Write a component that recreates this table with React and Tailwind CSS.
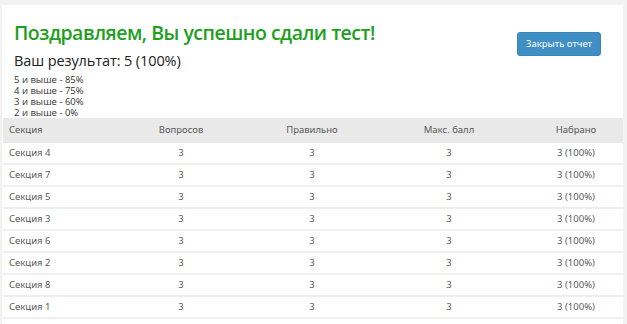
import React from "react";

const rows = ["Секция 4", "Секция 7", "Секция 5", "Секция 3", "Секция 6", "Секция 2", "Секция 8", "Секция 1"];
const cols = "grid grid-cols-[110px_136px_126px_148px_100px]";

export default function App() {
  return (
    <div className="w-[627px] h-[324px] bg-[#f2f2f2] pt-[5px] pl-[2px] pr-[4px] overflow-hidden" style={{ fontFamily: '"Open Sans", "Noto Sans", sans-serif' }}>
      <div className="bg-white h-full">
        <div className="flex justify-between pl-[12px] pr-[22px] pt-[15px]">
          <div>
            <h1 className="text-[19.5px] leading-[26px] text-[#1ea01e] font-semibold tracking-[-0.5px]">Поздравляем, Вы успешно сдали тест!</h1>
            <div className="text-[14.5px] leading-[20px] text-[#222] mt-[5px] tracking-[-0.1px]">Ваш результат: 5 (100%)</div>
            <div className="text-[9.5px] leading-[11px] text-[#333] mt-[3px]">
              <div>5 и выше - 85%</div>
              <div>4 и выше - 75%</div>
              <div>3 и выше - 60%</div>
              <div>2 и выше - 0%</div>
            </div>
          </div>
          <button className="mt-[12px] h-[24px] w-[84px] bg-[#3f8fc5] text-white text-[9.5px] rounded-[3px] border border-[#3a84b6]" style={{ fontFamily: '"Noto Sans", sans-serif' }}>Закрыть отчет</button>
        </div>
        <div className="ml-[1px] text-[9.5px] text-[#5a5a5a]" style={{ fontFamily: '"Noto Sans", sans-serif' }}>
          <div className={`${cols} bg-[#e9e9e9] h-[25px] items-center`}>
            <div className="pl-[6px]">Секция</div>
            <div className="text-center">Вопросов</div>
            <div className="text-center">Правильно</div>
            <div className="text-center">Макс. балл</div>
            <div className="text-center pl-[6px]">Набрано</div>
          </div>
          {rows.map((r) => (
            <div key={r} className={`${cols} h-[22px] items-center border-b-2 border-[#eceeef]`}>
              <div className="pl-[6px]">{r}</div>
              <div className="text-center">3</div>
              <div className="text-center">3</div>
              <div className="text-center">3</div>
              <div className="text-center pl-[6px]">3 (100%)</div>
            </div>
          ))}
        </div>
      </div>
    </div>
  );
}
